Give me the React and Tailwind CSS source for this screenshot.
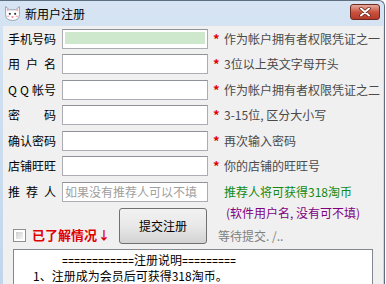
import React from 'react'

const font = { fontFamily: "'Noto Sans CJK SC', 'Noto Sans', sans-serif" }

const rows = [
  { label: ['手', '机', '号', '码'], hint: '作为帐户拥有者权限凭证之一', active: true },
  { label: ['用', '户', '名'], hint: '3位以上英文字母开头' },
  { label: ['Q', 'Q', '帐号'], hint: '作为帐户拥有者权限凭证之二' },
  { label: ['密', '码'], hint: '3-15位, 区分大小写' },
  { label: ['确', '认', '密', '码'], hint: '再次输入密码' },
  { label: ['店', '铺', '旺', '旺'], hint: '你的店铺的旺旺号' },
]

const CatIcon = () => (
  <svg width="17" height="17" viewBox="0 0 16 16">
    <path d="M1.5 1.5 L5 4.5 L11 4.5 L14.5 1.5 L14.5 9 Q14.5 14.5 8 14.5 Q1.5 14.5 1.5 9 Z" fill="#ffffff" stroke="#8d96a0" strokeWidth="0.8" />
    <path d="M2.5 2.8 L5 4.8 L3 6 Z" fill="#f4a7b9" />
    <path d="M13.5 2.8 L11 4.8 L13 6 Z" fill="#f4a7b9" />
    <circle cx="5.5" cy="8.3" r="1" fill="#333" />
    <circle cx="10.5" cy="8.3" r="1" fill="#333" />
    <ellipse cx="3.8" cy="10.6" rx="1.3" ry="0.8" fill="#f7b4c4" />
    <ellipse cx="12.2" cy="10.6" rx="1.3" ry="0.8" fill="#f7b4c4" />
    <path d="M6.8 10.8 Q8 13 9.2 10.8 Z" fill="#e0405a" />
  </svg>
)

const Field = ({ active, placeholder }) => (
  <div className="w-[146px] h-[20px] border border-[#abadb3] border-t-[#8f9296] bg-white px-[2px] pt-[2px]">
    {active && <div className="h-[12px] bg-[#cde8cd]" />}
    {placeholder && (
      <div className="w-[139px] text-[12px] leading-[14px] text-[#a0a0a0] whitespace-nowrap overflow-hidden">{placeholder}</div>
    )}
  </div>
)

const Label = ({ parts }) => (
  <div className="w-[48px] flex justify-between text-[12px] leading-[14px] text-black">
    {parts.map((p, i) => (
      <span key={i}>{p}</span>
    ))}
  </div>
)

export default function App() {
  return (
    <div className="w-[386px] h-[284px] overflow-hidden bg-white" style={font}>
      <div className="w-[385px] h-[284px] flex flex-col bg-gradient-to-b from-[#d6e4f3] to-[#c2d6eb] border-r border-t border-[#5f6f82] rounded-tr-[6px]">
        {/* title bar */}
        <div className="h-[25px] flex items-center pl-[4px] pr-[4px] shrink-0">
          <CatIcon />
          <span className="ml-[4px] text-[12px] leading-[14px] text-black">新用户注册</span>
          <div className="ml-auto mt-[-3px] w-[30px] h-[16px] rounded-[3px] border border-[#6d2a22] bg-gradient-to-b from-[#e7a99e] via-[#c9533f] to-[#b8392a] flex items-center justify-center">
            <svg width="14" height="10" viewBox="0 0 14 10">
              <path d="M3 1.5 L11 8.5 M11 1.5 L3 8.5" stroke="#5a2018" strokeWidth="3.4" strokeLinecap="round" />
              <path d="M3 1.5 L11 8.5 M11 1.5 L3 8.5" stroke="#ffffff" strokeWidth="2" strokeLinecap="round" />
            </svg>
          </div>
        </div>

        {/* client area */}
        <div className="flex-1 ml-[3px] mr-[1px] bg-[#f0f0f0] flex flex-col">
          {rows.map((r, i) => (
            <div key={i} className="h-[25.5px] flex items-center pl-[5px] shrink-0">
              <Label parts={r.label} />
              <div className="ml-[6px]">
                <Field active={r.active} />
              </div>
              <span className="ml-[5px] w-[7px] text-[13px] leading-[14px] text-[#e00000] font-bold">*</span>
              <span className="ml-[4px] text-[12px] leading-[14px] text-[#4a4a4a] whitespace-nowrap">{r.hint}</span>
            </div>
          ))}
          <div className="h-[25.5px] flex items-center pl-[5px] shrink-0">
            <Label parts={['推', '荐', '人']} />
            <div className="ml-[6px]">
              <Field placeholder="如果没有推荐人可以不填" />
            </div>
            <span className="ml-[16px] text-[12px] leading-[14px] text-[#118a11] whitespace-nowrap">推荐人将可获得318淘币</span>
          </div>

          {/* submit row */}
          <div className="h-[44.5px] flex shrink-0">
            <div className="w-[116px] flex items-end pb-[7px] pl-[10px]">
              <div className="w-[13px] h-[13px] border border-[#8f8f8f] bg-white p-[2px]">
                <div className="w-full h-full bg-gradient-to-br from-[#cfcfcf] to-[#f4f4f4]" />
              </div>
              <span className="ml-[6px] text-[13px] leading-[14px] font-bold text-[#e00000] whitespace-nowrap">已了解情况</span>
              <span className="ml-[1px] text-[12px] leading-[14px] font-bold text-[#e00000]">↓</span>
            </div>
            <div className="pt-[3.5px]">
              <button className="w-[88px] h-[36px] rounded-[3px] border border-[#707070] bg-gradient-to-b from-[#f2f2f2] via-[#e8e8e8] to-[#d2d2d2] text-[12px] leading-[14px] text-black">
                提交注册
              </button>
            </div>
            <div className="flex flex-col pl-[11px]">
              <span className="ml-[8px] mt-[1px] text-[12px] leading-[14px] text-[#800080] whitespace-nowrap">(软件用户名, 没有可不填)</span>
              <span className="mt-[9px] text-[12px] leading-[14px] text-[#808080] whitespace-nowrap">等待提交. /..</span>
            </div>
          </div>

          {/* notes box */}
          <div className="ml-[10px] w-[360px] flex-1 border border-[#828790] border-b-0 bg-white text-[12px] text-black">
            <div className="h-[19px] leading-[19px] pl-[48px] whitespace-nowrap">
              <span className="text-[10px]" style={{ fontFamily: "'Liberation Mono', monospace" }}>============</span>
              注册说明
              <span className="text-[10px]" style={{ fontFamily: "'Liberation Mono', monospace" }}>=========</span>
            </div>
            <div className="leading-[14px] pl-[19px] whitespace-nowrap">1、注册成为会员后可获得318淘币。</div>
          </div>
        </div>
      </div>
    </div>
  )
}
